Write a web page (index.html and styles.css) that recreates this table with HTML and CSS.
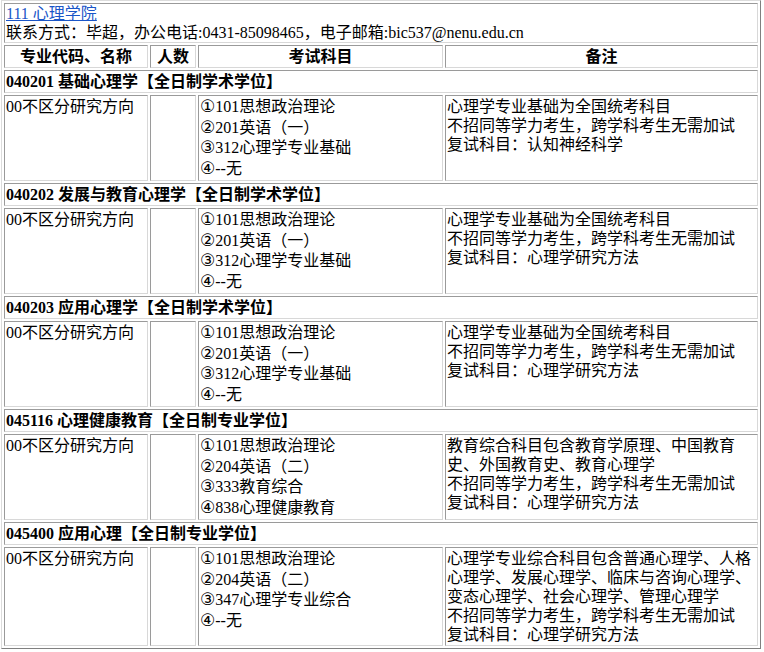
FILE: index.html
```html
<!DOCTYPE html>
<html lang="zh">
<head>
<meta charset="utf-8">
<title>111 心理学院</title>
<link rel="stylesheet" href="styles.css">
</head>
<body>
<table class="main">
  <colgroup>
    <col class="c1"><col class="c2"><col class="c3"><col class="c4">
  </colgroup>
  <tr>
    <td colspan="4" class="info">
      <a href="#" class="college">111 心理学院</a><br>
      联系方式：毕超，办公电话:0431-85098465，电子邮箱:bic537@nenu.edu.cn
    </td>
  </tr>
  <tr class="head">
    <td>专业代码、名称</td>
    <td>人数</td>
    <td>考试科目</td>
    <td>备注</td>
  </tr>

  <tr><td colspan="4" class="group">040201 基础心理学【全日制学术学位】</td></tr>
  <tr>
    <td class="dir">00不区分研究方向</td>
    <td></td>
    <td class="subj"><div><span class="n">①</span>101思想政治理论</div><div><span class="n">②</span>201英语（一）</div><div><span class="n">③</span>312心理学专业基础</div><div><span class="n">④</span>--无</div></td>
    <td class="note">心理学专业基础为全国统考科目<br>不招同等学力考生，跨学科考生无需加试<br>复试科目：认知神经科学</td>
  </tr>

  <tr><td colspan="4" class="group">040202 发展与教育心理学【全日制学术学位】</td></tr>
  <tr>
    <td class="dir">00不区分研究方向</td>
    <td></td>
    <td class="subj"><div><span class="n">①</span>101思想政治理论</div><div><span class="n">②</span>201英语（一）</div><div><span class="n">③</span>312心理学专业基础</div><div><span class="n">④</span>--无</div></td>
    <td class="note">心理学专业基础为全国统考科目<br>不招同等学力考生，跨学科考生无需加试<br>复试科目：心理学研究方法</td>
  </tr>

  <tr><td colspan="4" class="group">040203 应用心理学【全日制学术学位】</td></tr>
  <tr>
    <td class="dir">00不区分研究方向</td>
    <td></td>
    <td class="subj"><div><span class="n">①</span>101思想政治理论</div><div><span class="n">②</span>201英语（一）</div><div><span class="n">③</span>312心理学专业基础</div><div><span class="n">④</span>--无</div></td>
    <td class="note">心理学专业基础为全国统考科目<br>不招同等学力考生，跨学科考生无需加试<br>复试科目：心理学研究方法</td>
  </tr>

  <tr><td colspan="4" class="group">045116 心理健康教育【全日制专业学位】</td></tr>
  <tr>
    <td class="dir">00不区分研究方向</td>
    <td></td>
    <td class="subj"><div><span class="n">①</span>101思想政治理论</div><div><span class="n">②</span>204英语（二）</div><div><span class="n">③</span>333教育综合</div><div><span class="n">④</span>838心理健康教育</div></td>
    <td class="note">教育综合科目包含教育学原理、中国教育史、外国教育史、教育心理学<br>不招同等学力考生，跨学科考生无需加试<br>复试科目：心理学研究方法</td>
  </tr>

  <tr><td colspan="4" class="group">045400 应用心理【全日制专业学位】</td></tr>
  <tr>
    <td class="dir">00不区分研究方向</td>
    <td></td>
    <td class="subj"><div><span class="n">①</span>101思想政治理论</div><div><span class="n">②</span>204英语（二）</div><div><span class="n">③</span>347心理学专业综合</div><div><span class="n">④</span>--无</div></td>
    <td class="note">心理学专业综合科目包含普通心理学、人格心理学、发展心理学、临床与咨询心理学、变态心理学、社会心理学、管理心理学<br>不招同等学力考生，跨学科考生无需加试<br>复试科目：心理学研究方法</td>
  </tr>
</table>
</body>
</html>
```

FILE: styles.css
```css
body {
  margin: 0;
  font-family: "Liberation Serif", "Noto Sans CJK SC", serif;
  font-size: 16px;
  color: #000;
  background: #fff;
}

.main {
  margin: 0 1px 1px 1px;
  width: 760px;
  box-sizing: border-box;
  table-layout: fixed;
  border-collapse: separate;
  border-spacing: 2px;
  border: 1px solid;
  border-color: #dcdcdc #808080 #808080 #dcdcdc;
}

.c1 { width: 144px; }
.c2 { width: 46px; }
.c3 { width: 245px; }
.c4 { width: 313px; }

.main td {
  box-sizing: border-box;
  border: 1px solid;
  border-color: #9a9a9a #d8d8d8 #d8d8d8 #9a9a9a;
  padding: 1px;
  vertical-align: top;
  line-height: 19px;
  overflow-wrap: break-word;
}

.main td.info {
  padding: 0 1px;
}

.college {
  color: #1a56c8;
  text-decoration: underline;
}

.head td {
  font-weight: bold;
  text-align: center;
  line-height: 19px;
}

.main td.group {
  font-weight: bold;
}

.subj div {
  line-height: 20.5px;
  height: 20.5px;
  white-space: nowrap;
}

.n {
  font-family: "DejaVu Sans", sans-serif;
  font-size: 17px;
  line-height: 0;
}
```
